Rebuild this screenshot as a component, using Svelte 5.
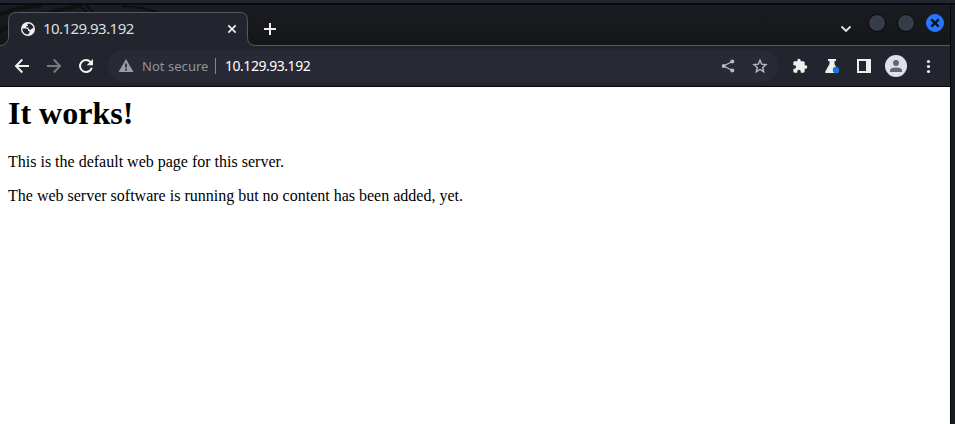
<script>
  const address = '10.129.93.192';
</script>

<div class="desktop">
  <div class="frame-top"></div>
  <div class="window">
    <div class="strip">
      <svg class="texture" width="260" height="41" viewBox="0 0 260 41" fill="none">
        <path d="M-5 12Q12 3 42 0M-5 29Q22 12 78 1" stroke="#101115" stroke-width="4" />
        <path d="M79 0L88 9M86 0L95 9M122 1Q145 2 162 9" stroke="#0e0f13" stroke-width="2" />
      </svg>
      <svg class="outline" width="950" height="41" viewBox="0 0 950 41">
        <path d="M0 40.500C5 40.500 8.500 37 8.500 32V15.500Q8.500 7.500 16.500 7.500H240Q247.500 7.500 247.500 15.500V32.500Q247.500 40.500 255.500 40.500H950V43H0Z" fill="#23252e" stroke="#57595e" />
      </svg>
      <div class="tab">
        <svg class="globe" width="16" height="16" viewBox="0 0 16 16">
          <circle cx="8" cy="8" r="7" fill="#f1f1ef" />
          <path d="M2.400 7.500H6.500Q8 7.500 8 9V10H9.500V11.500L8 13.400C4.600 13.300 2.400 11 2.400 7.500ZM6.300 3.500L9 2.500C11.500 3 13.400 5 13.500 7.300H12L11 8.800H9.500L8.500 7.500V6.400H6.300V4.900H8V3.700Z" fill="#23252e" />
        </svg>
        <span class="title">{address}</span>
        <svg class="close" width="10" height="10" viewBox="0 0 10 10"><path d="M1.300 1.300L8.700 8.700M8.700 1.300L1.300 8.700" stroke="#eeeeec" stroke-width="1.700" /></svg>
      </div>
      <svg class="plus" width="14" height="14" viewBox="0 0 14 14"><path d="M7 1V13M1 7H13" stroke="#eeeeec" stroke-width="2" /></svg>
      <div class="controls">
        <svg class="chevron" width="12" height="8" viewBox="0 0 12 8"><path d="M1.500 1.500L6 6L10.500 1.500" fill="none" stroke="#e5e5e3" stroke-width="1.800" /></svg>
        <i class="dot"></i>
        <i class="dot"></i>
        <i class="dot blue"><svg width="10" height="10" viewBox="0 0 10 10"><path d="M1.300 1.300L8.700 8.700M8.700 1.300L1.300 8.700" stroke="#0b1226" stroke-width="2.400" /></svg></i>
      </div>
    </div>

    <div class="toolbar">
      <div class="nav">
        <svg width="16" height="16" viewBox="0 0 16 16" fill="none" stroke="#f1f1ef" stroke-width="2"><path d="M15 8H2M8.300 1.500L2 8L8.300 14.500" /></svg>
        <svg width="16" height="16" viewBox="0 0 16 16" fill="none" stroke="#77797d" stroke-width="2"><path d="M1 8H14M7.700 1.500L14 8L7.700 14.500" /></svg>
        <svg width="16" height="16" viewBox="0 0 16 16"><path d="M12.500 4A6 6 0 1 0 13.800 9.700" fill="none" stroke="#f1f1ef" stroke-width="2" /><path d="M15 1V7.300H8.700Z" fill="#f1f1ef" /></svg>
      </div>
      <div class="omnibox">
        <svg width="16" height="16" viewBox="0 0 16 16"><path d="M8 1L15.500 14H.5Z" fill="#9a9ba4" /><path d="M8 5.500V9.500M8 10.800V12.500" stroke="#282a35" stroke-width="1.700" /></svg>
        <span class="security">Not secure</span>
        <i class="sep"></i>
        <span class="url">{address}</span>
        <svg class="share" width="16" height="16" viewBox="0 0 16 16"><path d="M12.300 3.500L3.700 8L12.300 12.500" fill="none" stroke="#b9bac0" stroke-width="1.300" /><g fill="#b9bac0"><circle cx="12.300" cy="3.500" r="2" /><circle cx="3.700" cy="8" r="2" /><circle cx="12.300" cy="12.500" r="2" /></g></svg>
        <svg width="16" height="16" viewBox="0 0 16 16"><path d="M8 2.200L9.700 6.200L14 6.600L10.700 9.500L11.700 13.700L8 11.500L4.300 13.700L5.300 9.500L2 6.600L6.300 6.200Z" fill="none" stroke="#b9bac0" stroke-width="1.400" /></svg>
      </div>
      <div class="actions">
        <svg width="16" height="16" viewBox="0 0 24 24"><path d="M20.500 11H19V7c0-1.100-.9-2-2-2h-4V3.500a2.500 2.500 0 0 0-5 0V5H4c-1.100 0-2 .9-2 2v3.800h1.500a2.700 2.700 0 0 1 0 5.400H2V20c0 1.100.9 2 2 2h3.800v-1.500a2.700 2.700 0 0 1 5.400 0V22H17c1.100 0 2-.9 2-2v-4h1.500a2.500 2.500 0 0 0 0-5z" fill="#eeeeec" /></svg>
        <svg width="16" height="16" viewBox="0 0 16 16"><path d="M4 1H12V3H10.500V6L14.500 13.500Q14.500 15 13 15H2Q.8 15 1.300 13.500L5.500 6V3H4Z" fill="#eeeeec" /><circle cx="12" cy="12" r="3.200" fill="#1a73e8" /></svg>
        <svg width="16" height="16" viewBox="0 0 16 16"><path d="M1 1H15V15H1ZM3 3V13H10V3Z" fill="#eeeeec" fill-rule="evenodd" /></svg>
        <svg class="avatar" width="22" height="22" viewBox="0 0 22 22"><circle cx="11" cy="11" r="11" fill="#dee1e6" /><circle cx="11" cy="8" r="3" fill="#5f6679" /><path d="M5 17V15.500Q5 12.500 11 12.500Q17 12.500 17 15.500V17Z" fill="#5f6679" /></svg>
        <svg width="16" height="16" viewBox="0 0 16 16" fill="#eeeeec"><circle cx="8.500" cy="3.500" r="1.600" /><circle cx="8.500" cy="8.500" r="1.600" /><circle cx="8.500" cy="13.500" r="1.600" /></svg>
      </div>
    </div>

    <main>
      <h1>It works!</h1>
      <p>This is the default web page for this server.</p>
      <p>The web server software is running but no content has been added, yet.</p>
    </main>
  </div>
</div>

<style>
  :global(body) { margin: 0; overflow: hidden; }
  .desktop { width: 955px; height: 424px; display: flex; flex-direction: column; background: linear-gradient(90deg, #07080b 951px, #171923 951px); box-sizing: border-box; }
  .frame-top { height: 5px; flex: none; box-sizing: border-box; background: #23242f; border-bottom: 2px solid #0a0b0e; }
  .window { width: 950px; flex: 1; display: flex; flex-direction: column; }
  .strip { height: 41px; flex: none; display: flex; position: relative; background: linear-gradient(#1b1c21, #15161a); }
  .texture, .outline { position: absolute; left: 0; top: 0; }
  svg { display: block; flex: none; }
  .tab { width: 240px; margin: 7px 0 0 8px; box-sizing: border-box; padding: 0 11px 0 12px; height: 33px; display: flex; align-items: center; position: relative; }
  .title { margin: 0 0 2px 7px; color: #dededf; font: 15px/20px "Noto Sans", sans-serif; letter-spacing: -.55px; flex: 1; }
  .plus { position: relative; margin: 17px 0 0 15px; }
  .controls { position: relative; margin-left: auto; display: flex; align-items: center; height: 36px; padding-right: 6px; }
  .chevron { margin: 12px 16px 0 0; }
  .dot { width: 16px; height: 16px; border: 1px solid #08090c; border-radius: 50%; background: #373c49; margin-right: 11px; display: flex; align-items: center; justify-content: center; }
  .blue { margin-right: 0; background: #2777ff; border-color: #2777ff; }
  .toolbar { height: 41px; flex: none; box-sizing: border-box; border-bottom: 1px solid #08090c; background: #23252e; display: flex; align-items: center; }
  .nav { display: flex; gap: 16px; padding: 0 14px; }
  .omnibox { width: 670px; height: 32px; box-sizing: border-box; border-radius: 16px; background: #282a35; padding: 0 10px; display: flex; align-items: center; font: 14px/20px "Noto Sans", sans-serif; }
  .security { margin-left: 8px; width: 73px; white-space: nowrap; color: #92949b; font-size: 13px; letter-spacing: .04px; }
  .sep { width: 1px; height: 16px; background: #85878e; }
  .url { margin-left: 9px; color: #fff; letter-spacing: -.47px; flex: 1; }
  .share { margin-right: 16px; }
  .actions { display: flex; align-items: center; gap: 16px; margin-left: 14px; }
  .avatar { margin: 0 -3px; }
  main { flex: 1; background: #fff; padding: 8px; color: #000; font: 16px/18px "Liberation Serif", "Times New Roman", serif; }
  h1 { font-size: 32px; line-height: 37px; margin: 0 0 21px; }
  p { margin: 0 0 16px; }
</style>
